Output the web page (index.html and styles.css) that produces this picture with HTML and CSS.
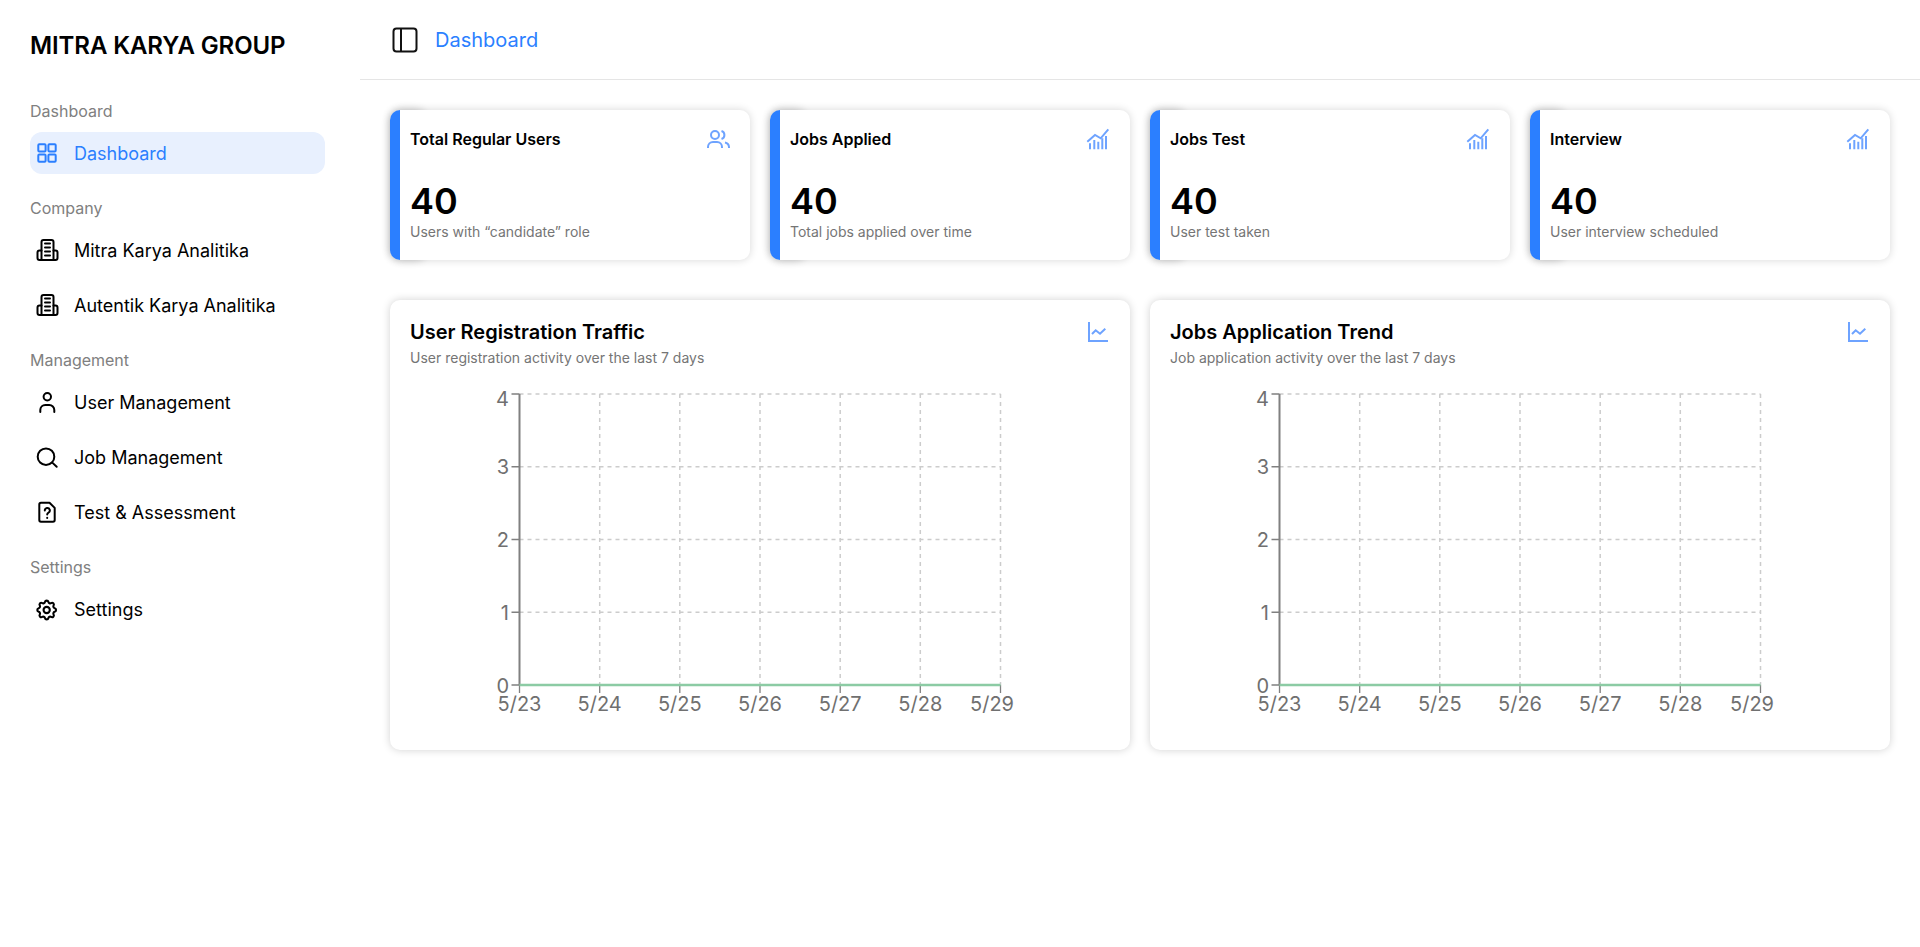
FILE: index.html
```html
<!DOCTYPE html>
<html lang="en">
<head>
  <meta charset="UTF-8">
  <meta name="viewport" content="width=device-width, initial-scale=1.0">
  <title>Mitra Karya Group</title>
  <link rel="stylesheet" href="styles.css">
</head>
<body>
  <aside class="sidebar">
    <div class="brand">MITRA KARYA GROUP</div>

    <div class="nav-label first">Dashboard</div>
    <a class="nav-item active">
      <svg class="nav-icon" viewBox="0 0 24 24"><rect x="3.3" y="3.3" width="7.3" height="7.3" rx="1"/><rect x="13.4" y="3.3" width="7.3" height="7.3" rx="1"/><rect x="3.3" y="13.4" width="7.3" height="7.3" rx="1"/><rect x="13.4" y="13.4" width="7.3" height="7.3" rx="1"/></svg>
      <span>Dashboard</span>
    </a>

    <div class="nav-label">Company</div>
    <a class="nav-item">
      <svg class="nav-icon" viewBox="0 0 24 24"><path d="M6.5 21V3a2 2 0 0 1 2-2h8a2 2 0 0 1 2 2v18"/><path d="M6.5 11.500H4.500a2 2 0 0 0-2 2V19a2 2 0 0 0 2 2h16a2 2 0 0 0 2-2v-5.500a2 2 0 0 0-2-2h-2"/><path d="M10 4.500h5M10 8.500h5M10 12.500h5M10 16.500h5"/></svg>
      <span>Mitra Karya Analitika</span>
    </a>
    <a class="nav-item">
      <svg class="nav-icon" viewBox="0 0 24 24"><path d="M6.5 21V3a2 2 0 0 1 2-2h8a2 2 0 0 1 2 2v18"/><path d="M6.5 11.500H4.500a2 2 0 0 0-2 2V19a2 2 0 0 0 2 2h16a2 2 0 0 0 2-2v-5.500a2 2 0 0 0-2-2h-2"/><path d="M10 4.500h5M10 8.500h5M10 12.500h5M10 16.500h5"/></svg>
      <span>Autentik Karya Analitika</span>
    </a>

    <div class="nav-label">Management</div>
    <a class="nav-item">
      <svg class="nav-icon" viewBox="0 0 24 24"><circle cx="12.3" cy="5.7" r="3.7"/><path d="M5.3 21v-2a5 5 0 0 1 5-5h4a5 5 0 0 1 5 5v2"/></svg>
      <span>User Management</span>
    </a>
    <a class="nav-item">
      <svg class="nav-icon" viewBox="0 0 24 24"><circle cx="11" cy="10.7" r="8.3"/><path d="M17.3 16.600 21.700 20.800"/></svg>
      <span>Job Management</span>
    </a>
    <a class="nav-item">
      <svg class="nav-icon" viewBox="0 0 24 24"><path d="M6 1.700h8.500l5.200 5.200V19a1.700 1.700 0 0 1-1.700 1.700H6A1.700 1.700 0 0 1 4.300 19V3.400A1.700 1.700 0 0 1 6 1.700z"/><path d="M9.800 9.500a2.500 2.500 0 1 1 3.700 2.200c-.8.400-1.300 1-1.300 1.800"/><path d="M12.200 16.800v.1"/></svg>
      <span>Test &amp; Assessment</span>
    </a>

    <div class="nav-label">Settings</div>
    <a class="nav-item">
      <svg class="nav-icon" viewBox="0.8 0.5 23 23"><path d="M10.325 4.317c.426-1.756 2.924-1.756 3.35 0a1.724 1.724 0 0 0 2.573 1.066c1.543-.94 3.31.826 2.37 2.37a1.724 1.724 0 0 0 1.065 2.572c1.756.426 1.756 2.924 0 3.35a1.724 1.724 0 0 0-1.066 2.573c.94 1.543-.826 3.31-2.37 2.37a1.724 1.724 0 0 0-2.572 1.065c-.426 1.756-2.924 1.756-3.35 0a1.724 1.724 0 0 0-2.573-1.066c-1.543.94-3.31-.826-2.37-2.37a1.724 1.724 0 0 0-1.065-2.572c-1.756-.426-1.756-2.924 0-3.35a1.724 1.724 0 0 0 1.066-2.573c-.94-1.543.826-3.31 2.37-2.37 1 .608 2.296.07 2.572-1.065z"/><circle cx="12" cy="12" r="3"/></svg>
      <span>Settings</span>
    </a>
  </aside>

  <main class="main">
    <header class="topbar">
      <svg class="topbar-icon" viewBox="0 0 26 26"><rect x="1.5" y="1.5" width="23" height="23" rx="3"/><path d="M9 1.500v23"/></svg>
      <span class="crumb">Dashboard</span>
    </header>

    <div class="content">
      <section class="stats">
        <div class="stat-card">
          <div class="stat-head">
            <span class="stat-title">Total Regular Users</span>
            <svg class="card-icon" viewBox="0 0 24 24"><circle cx="9" cy="8" r="4"/><path d="M2 21v-1a5 5 0 0 1 5-5h4a5 5 0 0 1 5 5v1"/><path d="M15.500 4a4.200 4.200 0 0 1 0 8"/><path d="M19 15.500a5 5 0 0 1 4 4.500v1"/></svg>
          </div>
          <div class="stat-value">40</div>
          <div class="stat-desc">Users with “candidate” role</div>
        </div>
        <div class="stat-card">
          <div class="stat-head">
            <span class="stat-title">Jobs Applied</span>
            <svg class="card-icon" viewBox="0 0 24 24"><path d="M1.300 14.700 9 8l5.700 3.300 7.600-9"/><path d="M4 16.300v6M8.300 13v9.300M12.300 14.700v7.600M16.300 11.300v11M20 9v13.300"/></svg>
          </div>
          <div class="stat-value">40</div>
          <div class="stat-desc">Total jobs applied over time</div>
        </div>
        <div class="stat-card">
          <div class="stat-head">
            <span class="stat-title">Jobs Test</span>
            <svg class="card-icon" viewBox="0 0 24 24"><path d="M1.300 14.700 9 8l5.700 3.300 7.600-9"/><path d="M4 16.300v6M8.300 13v9.300M12.300 14.700v7.600M16.300 11.300v11M20 9v13.300"/></svg>
          </div>
          <div class="stat-value">40</div>
          <div class="stat-desc">User test taken</div>
        </div>
        <div class="stat-card">
          <div class="stat-head">
            <span class="stat-title">Interview</span>
            <svg class="card-icon" viewBox="0 0 24 24"><path d="M1.300 14.700 9 8l5.700 3.300 7.600-9"/><path d="M4 16.300v6M8.300 13v9.300M12.300 14.700v7.600M16.300 11.300v11M20 9v13.300"/></svg>
          </div>
          <div class="stat-value">40</div>
          <div class="stat-desc">User interview scheduled</div>
        </div>
      </section>

      <section class="charts">
        <div class="chart-card">
          <div class="chart-head">
            <div>
              <div class="chart-title">User Registration Traffic</div>
              <div class="chart-sub">User registration activity over the last 7 days</div>
            </div>
            <svg class="card-icon" viewBox="0 0 24 24"><path d="M3 2v19h19"/><path d="M6 14l3.700-3.700 4.300 3.400 5.300-5"/></svg>
          </div>
          <svg class="chart" viewBox="0 0 700 363">
            <path class="grid" d="M109.500 27H590.500M109.500 99.750H590.500M109.500 172.500H590.500M109.500 245.250H590.500"/>
            <path class="grid" d="M189.700 27V318M269.800 27V318M350 27V318M430.200 27V318M510.300 27V318M590.500 27V318"/>
            <path class="ticks" d="M101.500 27H109.500M101.500 99.750H109.500M101.500 172.500H109.500M101.500 245.250H109.500M101.500 318H109.500"/>
            <path class="ticks" d="M109.500 318V326M189.700 318V326M269.800 318V326M350 318V326M430.200 318V326M510.300 318V326M590.500 318V326"/>
            <path class="axis" d="M109.500 27V318"/>
            <path class="trend" d="M109.500 318H590.500"/>
            <text class="y-label" x="99" y="39">4</text>
            <text class="y-label" x="99" y="107">3</text>
            <text class="y-label" x="99" y="180">2</text>
            <text class="y-label" x="99" y="253">1</text>
            <text class="y-label" x="99" y="326">0</text>
            <text class="x-label" x="109.5" y="343.5">5/23</text>
            <text class="x-label" x="189.7" y="343.5">5/24</text>
            <text class="x-label" x="269.8" y="343.5">5/25</text>
            <text class="x-label" x="350" y="343.5">5/26</text>
            <text class="x-label" x="430.2" y="343.5">5/27</text>
            <text class="x-label" x="510.3" y="343.5">5/28</text>
            <text class="x-label" x="582" y="343.5">5/29</text>
          </svg>
        </div>
        <div class="chart-card">
          <div class="chart-head">
            <div>
              <div class="chart-title">Jobs Application Trend</div>
              <div class="chart-sub">Job application activity over the last 7 days</div>
            </div>
            <svg class="card-icon" viewBox="0 0 24 24"><path d="M3 2v19h19"/><path d="M6 14l3.700-3.700 4.300 3.400 5.300-5"/></svg>
          </div>
          <svg class="chart" viewBox="0 0 700 363">
            <path class="grid" d="M109.500 27H590.500M109.500 99.750H590.500M109.500 172.500H590.500M109.500 245.250H590.500"/>
            <path class="grid" d="M189.700 27V318M269.800 27V318M350 27V318M430.200 27V318M510.300 27V318M590.500 27V318"/>
            <path class="ticks" d="M101.500 27H109.500M101.500 99.750H109.500M101.500 172.500H109.500M101.500 245.250H109.500M101.500 318H109.500"/>
            <path class="ticks" d="M109.500 318V326M189.700 318V326M269.800 318V326M350 318V326M430.200 318V326M510.300 318V326M590.500 318V326"/>
            <path class="axis" d="M109.500 27V318"/>
            <path class="trend" d="M109.500 318H590.500"/>
            <text class="y-label" x="99" y="39">4</text>
            <text class="y-label" x="99" y="107">3</text>
            <text class="y-label" x="99" y="180">2</text>
            <text class="y-label" x="99" y="253">1</text>
            <text class="y-label" x="99" y="326">0</text>
            <text class="x-label" x="109.5" y="343.5">5/23</text>
            <text class="x-label" x="189.7" y="343.5">5/24</text>
            <text class="x-label" x="269.8" y="343.5">5/25</text>
            <text class="x-label" x="350" y="343.5">5/26</text>
            <text class="x-label" x="430.2" y="343.5">5/27</text>
            <text class="x-label" x="510.3" y="343.5">5/28</text>
            <text class="x-label" x="582" y="343.5">5/29</text>
          </svg>
        </div>
      </section>
    </div>
  </main>
</body>
</html>
```

FILE: styles.css
```css
* {
  margin: 0;
  padding: 0;
  box-sizing: border-box;
}

body {
  font-family: 'Inter', sans-serif;
  color: #000;
  background: #fff;
  display: flex;
  min-height: 100vh;
}

.sidebar {
  width: 360px;
  flex-shrink: 0;
  padding: 31px 30px 0;
}

.brand {
  font-size: 24px;
  font-weight: 600;
  line-height: 30px;
  letter-spacing: -0.1px;
}

.nav-label {
  font-size: 16px;
  line-height: 20px;
  color: #808080;
  margin: 23px 0 11px;
}

.nav-label.first {
  margin-top: 40px;
}

.nav-item {
  display: flex;
  align-items: center;
  gap: 15px;
  height: 43px;
  width: 295px;
  padding-left: 5px;
  margin-bottom: 12px;
  border-radius: 12px;
  font-size: 18px;
}

.nav-item.active {
  height: 42px;
  margin-bottom: 24px;
  color: #2b7fff;
  background: #e8f0fe;
}

.nav-icon {
  width: 24px;
  height: 24px;
  fill: none;
  stroke: currentColor;
  stroke-width: 2;
  stroke-linecap: round;
  stroke-linejoin: round;
  flex-shrink: 0;
}

.main {
  flex: 1;
  min-width: 0;
}

.topbar {
  height: 80px;
  border-bottom: 1px solid #e5e5e5;
  display: flex;
  align-items: center;
  gap: 17px;
  padding-left: 32px;
}

.topbar-icon {
  width: 26px;
  height: 26px;
  fill: none;
  stroke: #111;
  stroke-width: 2;
}

.crumb {
  font-size: 20px;
  color: #2b7fff;
}

.content {
  padding: 30px;
}

.stats {
  display: grid;
  grid-template-columns: repeat(4, 1fr);
  gap: 20px;
}

.stat-card {
  position: relative;
  height: 150px;
  padding: 17px 20px 0 10px;
  border-radius: 10px;
  background: #fff;
  border-left: 10px solid #2b7fff;
  box-shadow: 0 0 8px rgba(0, 0, 0, 0.16);
}

/* darker shadow patch behind the blue edge */
.stat-card::before {
  content: "";
  position: absolute;
  top: 0;
  bottom: 0;
  left: -10px;
  width: 36px;
  border-radius: 10px;
  box-shadow: 0 0 8px rgba(0, 0, 0, 0.22);
  z-index: -1;
}

.stat-head {
  display: flex;
  justify-content: space-between;
  align-items: center;
  margin-bottom: 28px;
}

.stat-title {
  font-size: 16px;
  font-weight: 600;
  line-height: 20px;
}

.card-icon {
  width: 24px;
  height: 24px;
  fill: none;
  stroke: #6ea3ff;
  stroke-width: 2;
  flex-shrink: 0;
}

.stat-value {
  font-size: 36px;
  font-weight: 600;
  line-height: 44px;
}

.stat-desc {
  font-size: 14px;
  line-height: 18px;
  color: #757575;
}

.charts {
  display: grid;
  grid-template-columns: 1fr 1fr;
  gap: 20px;
  margin-top: 40px;
}

.chart-card {
  height: 450px;
  padding: 20px;
  border-radius: 10px;
  background: #fff;
  box-shadow: 0 0 8px rgba(0, 0, 0, 0.18);
}

.chart-head {
  display: flex;
  justify-content: space-between;
  align-items: flex-start;
}

.chart-title {
  font-size: 20px;
  font-weight: 600;
  line-height: 24px;
}

.chart-sub {
  font-size: 14px;
  line-height: 18px;
  margin-top: 5px;
  color: #757575;
}

.chart {
  display: block;
  width: 700px;
  height: 363px;
  overflow: visible;
}

.grid {
  fill: none;
  stroke: #ccc;
  stroke-width: 1.5;
  stroke-dasharray: 4 4;
}

.ticks {
  fill: none;
  stroke: #808080;
  stroke-width: 1.3;
}

.axis {
  fill: none;
  stroke: #808080;
  stroke-width: 2;
}

.trend {
  fill: none;
  stroke: #8ccba4;
  stroke-width: 2.5;
}

.y-label,
.x-label {
  font-size: 20px;
  fill: #707070;
}

.y-label {
  text-anchor: end;
}

.x-label {
  text-anchor: middle;
}
```
